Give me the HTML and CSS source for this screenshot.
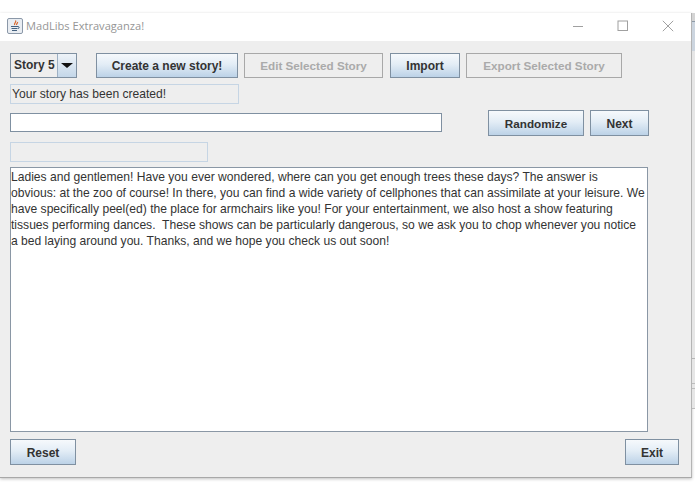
FILE: index.html
```html
<!DOCTYPE html>
<html lang="en">
<head>
<meta charset="utf-8">
<title>MadLibs Extravaganza!</title>
<link rel="stylesheet" href="styles.css">
</head>
<body>
<div class="desktop">
  <div class="window">
    <header class="titlebar">
      <svg class="appicon" width="16" height="16" viewBox="0 0 16 16" aria-hidden="true">
        <rect x="0.5" y="0.5" width="15" height="15" rx="1.5" fill="#e9edf2" stroke="#8b98a8"/>
        <path d="M8.5 2.5c1.5 1.5-2 2.5-.8 4.5M10.5 4c.6 1.2-1.5 1.8-.8 3" fill="none" stroke="#d9662a" stroke-width="1.2"/>
        <path d="M4 8.5h7M4.5 10.5h6M5 12.5h5" stroke="#45617f" stroke-width="1"/>
        <path d="M11 8.5c1.5 0 1.5 2 0 2" fill="none" stroke="#45617f"/>
      </svg>
      <span class="title">MadLibs Extravaganza!</span>
      <div class="controls">
        <svg width="12" height="12" viewBox="0 0 12 12" aria-hidden="true"><path d="M1 6.5h10" stroke="#a0a0a0"/></svg>
        <svg width="12" height="12" viewBox="0 0 12 12" aria-hidden="true"><rect x="1" y="1" width="9.5" height="9.5" fill="none" stroke="#a0a0a0"/></svg>
        <svg width="12" height="12" viewBox="0 0 12 12" aria-hidden="true"><path d="M.8.8l10.4 10.4M11.2.8L.8 11.2" stroke="#a0a0a0"/></svg>
      </div>
    </header>
    <main class="client">
      <div class="row toolbar">
        <div class="combo"><span class="combo-value">Story 5</span><span class="combo-arrow"><i class="tri"></i></span></div>
        <button class="btn create">Create a new story!</button>
        <button class="btn edit" disabled>Edit Selected Story</button>
        <button class="btn import">Import</button>
        <button class="btn export" disabled>Export Selected Story</button>
      </div>
      <div class="label status">Your story has been created!</div>
      <div class="row inputrow">
        <div class="input"></div>
        <button class="btn randomize">Randomize</button>
        <button class="btn next">Next</button>
      </div>
      <div class="label empty"></div>
      <div class="story">Ladies and gentlemen! Have you ever wondered, where can you get enough trees these days? The answer is obvious: at the zoo of course! In there, you can find a wide variety of cellphones that can assimilate at your leisure. We have specifically peel(ed) the place for armchairs like you! For your entertainment, we also host a show featuring tissues performing dances.&nbsp; These shows can be particularly dangerous, so we ask you to chop whenever you notice a bed laying around you. Thanks, and we hope you check us out soon!</div>
      <div class="row bottom">
        <button class="btn reset">Reset</button>
        <button class="btn exit">Exit</button>
      </div>
    </main>
  </div>
  <div class="behind">
    <div class="seg s0"></div>
    <div class="seg s1"></div>
    <div class="seg s2"></div>
    <div class="seg s3"></div>
    <div class="seg s4"></div>
    <div class="seg s5"></div>
  </div>
</div>
</body>
</html>
```
FILE: styles.css
```css
* { box-sizing: border-box; }
html, body { margin: 0; padding: 0; background: #fff; }
body { font-family: "Liberation Sans", Arial, sans-serif; overflow: hidden; }
.desktop { width: 695px; height: 494px; display: flex; align-items: flex-start; background: #fff; }
.window { width: 692px; height: 465px; margin-top: 13px; display: flex; flex-direction: column; border-right: 1px solid #b4b4b4; border-bottom: 1px solid #a8a8a8; box-shadow: 0 1px 3px rgba(0,0,0,.25); }
.titlebar { height: 28px; display: flex; align-items: center; padding: 0 0 3px 7px; background: #fff; flex: none; }
.appicon { flex: none; }
.title { margin-left: 3px; font-family: "Open Sans", sans-serif; font-size: 11.1px; color: #969696; }
.controls { margin-left: auto; display: flex; gap: 33px; padding-right: 17px; }
.client { flex: 1; background: #eeeeee; padding: 12px 12px 0 10px; display: flex; flex-direction: column; }
.row { display: flex; align-items: center; }
.toolbar { height: 25px; }
.btn { height: 100%; padding: 1px 0 0; font: bold 12px "Liberation Sans", Arial, sans-serif; color: #333; border: 1px solid #7f90a1; background: linear-gradient(#f6f9fc, #e3edf6 45%, #bcd2e7); }
.btn:disabled { padding-top: 0; font-size: 11.7px; color: #aaaaaa; background: #eeeeee; border-color: #a8a8a8; }
.combo { width: 67px; height: 25px; display: flex; border: 1px solid #7f90a1; background: #eeeeee; font-weight: bold; font-size: 12px; color: #333; }
.combo-value { flex: 1; padding-left: 3px; line-height: 22px; }
.combo-arrow { width: 19px; display: flex; align-items: center; justify-content: center; border-left: 1px solid #9db0c4; background: linear-gradient(#eef3f8, #c4d7e9); }
.tri { border-left: 6px solid transparent; border-right: 6px solid transparent; border-top: 5px solid #111; }
.create { width: 142px; margin-left: 19px; }
.edit { width: 139px; margin-left: 6px; }
.import { width: 70px; margin-left: 7px; }
.export { width: 156px; margin-left: 6px; }
.label { border: 1px solid #c6d5e4; background: #eeeeee; font-size: 12.1px; color: #333; flex: none; }
.status { width: 229px; height: 20px; margin-top: 6px; padding-left: 1px; line-height: 18px; }
.inputrow { height: 26px; margin-top: 6px; }
.input { width: 432px; height: 19px; align-self: flex-start; margin-top: 3px; background: #fff; border: 1px solid #7f90a1; margin-right: 46px; }
.randomize { width: 96px; padding-top: 0; font-size: 11.7px; }
.next { width: 59px; margin-left: 6px; }
.empty { width: 198px; height: 20px; margin-top: 6px; }
.story { width: 638px; height: 265px; margin-top: 5px; background: #fff; border: 1px solid #8a97a5; padding: 1px 2px 0 0; font-size: 12.1px; line-height: 16px; color: #333; flex: none; }
.bottom { height: 26px; margin-top: 7px; justify-content: space-between; }
.reset { width: 66px; }
.exit { width: 54px; }
.behind { flex: 1; margin-top: 13px; display: flex; flex-direction: column; }
.seg { flex: none; background: #e6e6e6; border-bottom: 1px solid #bdbdbd; }
.s0 { height: 9px; background: #d4d4d4; border-bottom-color: #8d9aa6; }
.s1 { height: 29px; background: #ccd5df; border-bottom: 0; }
.s2 { height: 308px; border-bottom-color: #b5b5b5; }
.s3 { height: 25px; }
.s4 { height: 5px; }
.s5 { height: 20px; }
```
